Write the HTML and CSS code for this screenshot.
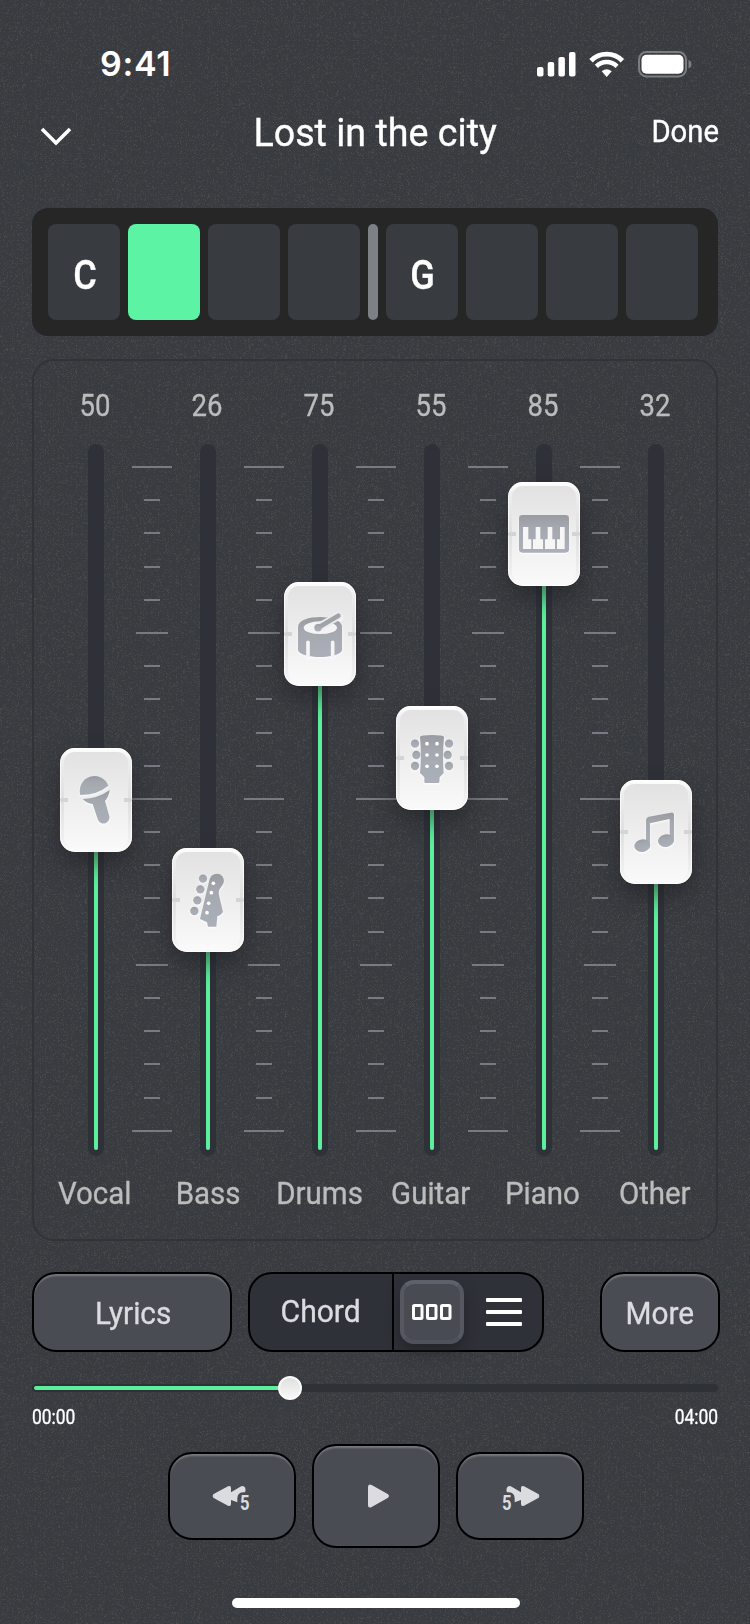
FILE: index.html
```html
<!DOCTYPE html>
<html lang="en">
<head>
<meta charset="utf-8">
<title>Lost in the city</title>
<link rel="stylesheet" href="styles.css">
</head>
<body>
<div class="phone">
  <svg class="grain" width="750" height="1624" aria-hidden="true">
    <filter id="grain" x="0" y="0" width="100%" height="100%" color-interpolation-filters="sRGB">
      <feTurbulence type="fractalNoise" baseFrequency="0.39" numOctaves="1" seed="4"/>
      <feColorMatrix values="0 0 0 0 0.302  0 0 0 0 0.294  0 0 0 0 0.298  7 0 0 0 -3"/>
      <feComponentTransfer><feFuncA type="table" tableValues="0 0 0.9 0 0"/></feComponentTransfer>
    </filter>
    <rect width="750" height="1624" filter="url(#grain)"/>
  </svg>

  <header class="status">
    <span class="time">9:41</span>
    <svg class="status-icons" width="156" height="28" viewBox="0 0 156 28" fill="#fff">
      <rect x="0" y="17" width="6.5" height="9.5" rx="2"/><rect x="10.7" y="12" width="6.5" height="14.5" rx="2"/><rect x="21.4" y="7" width="6.500" height="19.500" rx="2"/><rect x="32" y="2" width="6.500" height="24.500" rx="2"/>
      <path d="M54 10.700a22 22 0 0 1 31.400 0" fill="none" stroke="#fff" stroke-width="4.800"/>
      <path d="M59.400 16.300a14.700 14.700 0 0 1 20.600 0" fill="none" stroke="#fff" stroke-width="4.500"/>
      <path d="M64.700 21.200q5-4 10 0L69.700 27Z"/>
      <rect x="102" y="2" width="47" height="24.500" rx="7.500" fill="none" stroke="#7b7d80" stroke-width="2"/>
      <rect x="104.500" y="4.800" width="42" height="19" rx="5"/>
      <path d="M151.500 10q3 1 3 4.300t-3 4.200Z" fill="#7b7d80"/>
    </svg>
  </header>

  <nav class="nav">
    <svg class="chevron" width="34" height="22" viewBox="0 0 34 22"><path d="M2 3 16 17 30 3" fill="none" stroke="#fff" stroke-width="3.600"/></svg>
    <h1 class="title">Lost in the city</h1>
    <span class="done">Done</span>
  </nav>

  <section class="chords">
    <div class="beat"><span>C</span></div><div class="beat on"></div><div class="beat"></div><div class="beat"></div>
    <div class="bar-line"></div>
    <div class="beat"><span>G</span></div><div class="beat"></div><div class="beat"></div><div class="beat"></div>
  </section>

  <section class="mixer">
    <svg width="0" height="0" class="defs"><linearGradient id="ink" x1="0" y1="0" x2="0" y2="1"><stop offset="0" stop-color="#989ca1"/><stop offset=".3" stop-color="#a4a8ae"/><stop offset="1" stop-color="#abafb9"/></linearGradient></svg>
    <div class="row values"><span>50</span><span>26</span><span>75</span><span>55</span><span>85</span><span>32</span></div>
    <div class="faders">
      <div class="fader"><div class="track"><i class="fill" style="top:356px"></i></div>
        <div class="thumb" style="top:304px"><svg viewBox="0 0 216 312" class="icon"><path d="M61 141A44.300 44.300 0 0 1 145 113Q112 141 61 141Z"/><path d="M68 153Q112 152 149 126Q147 145 135 159L148 205A18 18 0 0 1 114 216L98 168Q80 166 68 153Z"/></svg></div></div>
      <div class="scale"></div>
      <div class="fader"><div class="track"><i class="fill" style="top:456px"></i></div>
        <div class="thumb" style="top:404px"><svg viewBox="0 0 216 312" class="icon"><circle cx="93" cy="92" r="12.500"/><circle cx="85" cy="124" r="12.500"/><circle cx="76" cy="157" r="12.500"/><circle cx="67" cy="189" r="12.500"/><path d="M112 96Q117 77 135 77A21 21 0 0 1 156 100Q155 110 146 119Q138 128 141 142L153 192Q147 202 136 205L133 236H108L105 223L84 213Z"/><g fill="#fff"><circle cx="124" cy="106" r="5.500"/><circle cx="118" cy="134" r="5.500"/><circle cx="110" cy="166" r="5.500"/><circle cx="105" cy="194" r="5.500"/></g></svg></div></div>
      <div class="scale"></div>
      <div class="fader"><div class="track"><i class="fill" style="top:190px"></i></div>
        <div class="thumb" style="top:138px"><svg viewBox="0 0 216 312" class="icon"><path d="M42 134C42 95 174 95 174 134V204C170 232 46 232 42 204Z"/><ellipse cx="109" cy="137" rx="50" ry="19" fill="#f4f4f4"/><path d="M102 137 163 102" stroke="#ececec" stroke-width="25" stroke-linecap="round"/><path d="M72 225V181M146 225V181" stroke="#f5f5f5" stroke-width="11" stroke-linecap="round"/><path d="M102 137 163 101" stroke="#a0a4aa" stroke-width="14" stroke-linecap="round"/><circle cx="102" cy="137" r="11"/></svg></div></div>
      <div class="scale"></div>
      <div class="fader"><div class="track"><i class="fill" style="top:314px"></i></div>
        <div class="thumb" style="top:262px"><svg viewBox="0 0 216 312" class="icon"><circle cx="57" cy="113" r="12.500"/><circle cx="61" cy="147" r="12.500"/><circle cx="57" cy="180" r="12.500"/><circle cx="159" cy="113" r="12.500"/><circle cx="155" cy="147" r="12.500"/><circle cx="159" cy="180" r="12.500"/><path d="M72 92Q74 88 108 87Q142 88 144 92Q139 150 143 201L131 214L130 228Q130 231 126 231H89Q85 231 85 228V214L72 201Q77 150 72 92Z"/><g fill="#fff"><circle cx="93" cy="113" r="5.500"/><circle cx="123" cy="113" r="5.500"/><circle cx="93" cy="147" r="5.500"/><circle cx="123" cy="147" r="5.500"/><circle cx="93" cy="181" r="5.500"/><circle cx="123" cy="181" r="5.500"/></g></svg></div></div>
      <div class="scale"></div>
      <div class="fader"><div class="track"><i class="fill" style="top:90px"></i></div>
        <div class="thumb" style="top:38px"><svg viewBox="0 0 216 312" class="icon"><rect x="33" y="99" width="150" height="113" rx="10"/><path fill="#f6f6f6" d="M45 135H61V172H70V201H45ZM83 135H97V172H105V201H75V172H83ZM119 135H133V172H141V201H111V172H119ZM156 135H170V201H147V172H156Z"/></svg></div></div>
      <div class="scale"></div>
      <div class="fader"><div class="track"><i class="fill" style="top:388px"></i></div>
        <div class="thumb" style="top:336px"><svg viewBox="0 0 216 312" class="icon"><path d="M78 190V120Q78 112 86 110L152 98Q162 96 162 106V182H149V117L90 130V198Z"/><ellipse cx="67" cy="197" rx="24" ry="19" transform="rotate(-10 67 197)"/><ellipse cx="138" cy="182" rx="24" ry="19" transform="rotate(-10 138 182)"/></svg></div></div>
    </div>
    <div class="row labels"><span>Vocal</span><span>Bass</span><span>Drums</span><span>Guitar</span><span>Piano</span><span>Other</span></div>
  </section>

  <section class="actions">
    <button class="btn lyrics"><span>Lyrics</span></button>
    <div class="segment">
      <div class="seg-label"><span>Chord</span></div>
      <div class="seg-modes">
        <div class="mode active"><svg width="40" height="16" viewBox="0 0 40 16" fill="none" stroke="#fff" stroke-width="3"><rect x="1.500" y="1.500" width="8.500" height="13" rx="1"/><rect x="15.500" y="1.500" width="8.500" height="13" rx="1"/><rect x="29.500" y="1.500" width="8.500" height="13" rx="1"/></svg></div>
        <div class="list"><i></i><i></i><i></i></div>
      </div>
    </div>
    <button class="btn more"><span>More</span></button>
  </section>

  <section class="progress">
    <div class="rail"><i class="played"></i><i class="knob"></i></div>
    <div class="times"><span>00:00</span><span>04:00</span></div>
  </section>

  <section class="transport">
    <button class="btn skip"><svg width="124" height="84" viewBox="6 6 372 252" fill="#dcdce0"><path d="M137 126 180 103Q189 100 189 108V121L217 104Q223 100 229 104Q235 110 231 121Q209 119 208 138V151L189 144V156Q189 164 180 161L137 138Q131 132 137 126Z"/><text transform="translate(216 174) scale(.86 1)" class="five">5</text></svg></button>
    <button class="btn play"><svg width="124" height="100" viewBox="6 6 372 300" fill="#dcdce0"><path d="M168 129Q168 118 179 123L227 150Q235 156 227 162L179 189Q168 194 168 183Z"/></svg></button>
    <button class="btn skip"><svg width="124" height="84" viewBox="6 6 372 252" fill="#dcdce0"><path transform="matrix(-1 0 0 1 384 0)" d="M137 126 180 103Q189 100 189 108V121L217 104Q223 100 229 104Q235 110 231 121Q209 119 208 138V151L189 144V156Q189 164 180 161L137 138Q131 132 137 126Z"/><text transform="translate(138 174) scale(.86 1)" class="five">5</text></svg></button>
  </section>
  <div class="home"></div>
</div>
<script src="scale.js"></script>
</body>
</html>
```
FILE: styles.css
```css
* { box-sizing: border-box; }
body { margin: 0; background: #383b40; font-family: Roboto, "Liberation Sans", sans-serif; color: #fff; }
.phone { position: relative; width: 750px; height: 1624px; overflow: hidden; background: #383b40; isolation: isolate; -webkit-text-stroke: .35px currentColor; }
.grain { position: absolute; inset: 0; z-index: -1; }
.defs { position: absolute; }

.status { display: flex; justify-content: space-between; align-items: center; margin-top: 32px; height: 64px; padding: 0 57px 0 100px; }
.time { font: 600 34px/40px Inter, sans-serif; letter-spacing: .7px; -webkit-text-stroke: 0; }

.nav { display: grid; grid-template-columns: 1fr auto 1fr; align-items: center; height: 72px; padding: 0 30px 0 40px; }
.chevron { margin-top: 9px; }
.title { margin: 2px 10px 0 0; font-size: 39px; line-height: 48px; font-weight: 400; transform: scaleX(.965); }
.done { justify-self: end; font-size: 30.5px; line-height: 40px; transform: scaleX(.96); }

.chords { display: flex; gap: 8px; height: 128px; margin: 40px 32px 0; padding: 16px; border-radius: 16px; background: #262626; }
.beat { width: 72px; height: 96px; border-radius: 8px; background: #383b40; display: flex; align-items: center; justify-content: center; padding: 6px 0 0 2px; font-size: 40px; font-weight: 500; }
.beat span { transform: scaleX(.9); }
.beat.on { background: #5df3a4; }
.bar-line { width: 10px; border-radius: 5px; background: #7e8088; }

.mixer { height: 882px; margin: 23px 32px 0; padding: 0 6px; border: 2px solid #313338; border-radius: 22px; }
.row { display: grid; grid-template-columns: repeat(6, 112px); justify-items: center; color: #bcbcbc; }
.row span { display: block; transform: scaleX(.95); }
.values { padding-top: 24px; height: 83px; font-size: 32px; line-height: 40px; }
.values span { transform: scaleX(.86); margin-left: -2px; }
.labels { padding-top: 18px; font-size: 31px; line-height: 40px; }
.labels span { margin-left: -2px; }
.labels span:nth-child(2), .labels span:nth-child(3) { margin-left: 0; }
.labels span:nth-child(4), .labels span:nth-child(5) { margin-left: -3px; }
.faders { display: flex; height: 712px; padding-left: 20px; }
.fader { position: relative; width: 72px; display: flex; justify-content: center; }
.track { position: relative; width: 16px; height: 712px; border-radius: 8px; background: #2e3138; }
.fill { position: absolute; left: 6px; width: 4px; bottom: 6px; border-radius: 0 0 2px 2px; background: #5df09c; }
.thumb { position: absolute; left: 0; width: 72px; height: 104px; border-radius: 15px; background: linear-gradient(#fff, #ededed 12%, #dfdfdf 50%, #f0f0f0 88%, #fbfbfb); box-shadow: 0 12px 24px rgba(30,30,32,.55), inset 0 0 0 1px rgba(255,255,255,.75); }
.thumb::before { content: ""; position: absolute; inset: 4px 4px 1px; border-radius: 11px 11px 14px 14px; background: linear-gradient(#e2e2e2, #fafafa); }
.thumb::after { content: ""; position: absolute; left: 0; right: 0; top: 50px; height: 4px; border-left: 8px solid #d3d4d8; border-right: 8px solid #d3d4d8; border-radius: 2px; }
.icon { position: absolute; inset: 0; width: 72px; height: 104px; fill: url(#ink); filter: drop-shadow(0 1px 1px #fff); }
.scale { width: 40px; height: 666px; margin-top: 22px; display: flex; flex-direction: column; justify-content: space-between; align-items: center; }
.scale i { width: 16px; height: 2px; background: #777a80; }
.scale i:nth-child(5n+1) { width: 32px; }
.scale i:nth-child(10n+1) { width: 40px; }

.actions { display: flex; gap: 16px; margin-top: 31px; padding: 0 30px 0 32px; }
.btn { display: flex; align-items: center; justify-content: center; height: 80px; padding: 0; border: 2px solid #000; border-radius: 24px; background: #4a4c54; color: #dcdce0; font: 400 32px/40px Roboto, sans-serif; -webkit-text-stroke: inherit; box-shadow: inset 0 3px 2px -1px rgba(255,255,255,.26); }
.btn span { transform: scaleX(.93); margin: 1px 0 0 2px; }
.more span { margin-left: 0; }
.lyrics { width: 200px; }
.more { width: 120px; margin-left: auto; }
.segment { display: flex; width: 296px; height: 80px; border: 2px solid #000; border-radius: 24px; background: #2f3139; color: #dcdce0; }
.seg-label { width: 144px; border-right: 2px solid #000; display: flex; align-items: center; justify-content: center; font-size: 32px; line-height: 40px; }
.seg-label span { transform: scaleX(.94); margin: -3px 0 0 -1px; }
.seg-modes { display: flex; align-items: center; gap: 22px; padding-left: 6px; }
.mode { display: flex; align-items: center; justify-content: center; width: 64px; height: 64px; border-radius: 14px; border: 4px solid; border-color: #5e616b #555861 #4f525a; background: #494b53; box-shadow: 0 8px 14px rgba(30,30,32,.6); }
.list { display: flex; flex-direction: column; gap: 8px; }
.list i { width: 36px; height: 4px; border-radius: 1px; background: #fff; }

.progress { padding: 0 32px; margin-top: 32px; }
.rail { position: relative; width: 686px; height: 8px; border-radius: 4px; background: #2e3136; }
.played { position: absolute; left: 2px; top: 2px; width: 250px; height: 4px; border-radius: 2px; background: #5df09c; }
.knob { position: absolute; left: 246px; top: -8px; width: 24px; height: 24px; border-radius: 50%; background: linear-gradient(#e0e0e0, #f8f8f8); border: 2px solid #fafafa; }
.times { display: flex; justify-content: space-between; margin-top: 13px; font-size: 20.5px; line-height: 24px; }
.times span { transform: scaleX(.85); transform-origin: left; }
.times span:last-child { transform-origin: right; }

.transport { display: flex; align-items: center; gap: 16px; margin: 15px 0 0 168px; height: 104px; }
.skip { width: 128px; height: 88px; }
.play { width: 128px; height: 104px; }
.five { font: 700 58px Roboto, sans-serif; -webkit-text-stroke: 0; }
.home { width: 288px; height: 10px; margin: 50px 0 0 232px; border-radius: 5px; background: #fff; }
```
FILE: scale.js
```js
// Each scale has 21 evenly spaced tick marks.
document.querySelectorAll('.scale').forEach(function (scale) {
  for (var n = 0; n < 21; n++) scale.appendChild(document.createElement('i'));
});
```
